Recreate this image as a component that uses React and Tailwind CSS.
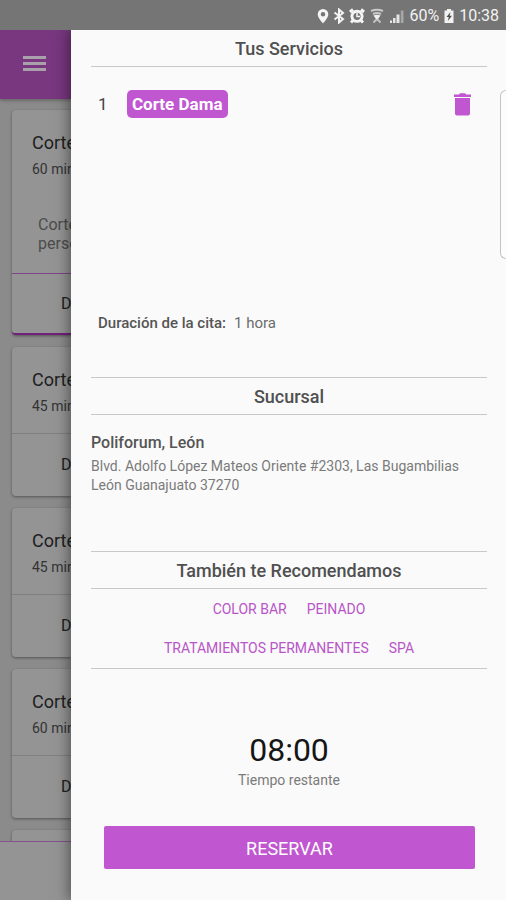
import React from "react";

const services = [
  { name: "Corte", time: "60 min", note: ["Corte", "perso"], featured: true },
  { name: "Corte", time: "45 min" },
  { name: "Corte", time: "45 min" },
  { name: "Corte", time: "60 min" },
];

function StatusBar() {
  return (
    <header className="flex h-[30px] items-center justify-end gap-1 bg-[#757575] pr-[7px] pt-[2px] text-[16px] leading-7 text-[#f2f2f2]">
      <svg className="h-4 w-3" viewBox="0 0 12 16" aria-hidden="true">
        <path fill="#f4f4f4" fillRule="evenodd" d="M6 1a5.3 5.3 0 0 0-5.3 5.3C.7 10 6 15.400 6 15.400S11.300 10 11.300 6.300A5.300 5.300 0 0 0 6 1zm0 3a2.300 2.300 0 1 1 0 4.600A2.300 2.300 0 0 1 6 4z" />
      </svg>
      <svg className="h-4 w-3" viewBox="0 0 12 16" aria-hidden="true">
        <path fill="none" stroke="#f4f4f4" strokeWidth="2" d="M1.500 4.500L10 11l-4 3.500v-13L10 5l-8.500 6.500" />
      </svg>
      <svg className="h-4 w-4" viewBox="0 0 16 16" aria-hidden="true">
        <path stroke="#f4f4f4" strokeWidth="3" d="M1 4l3-2.500M15 4l-3-2.500M2 14.500l2.500-2.500M14 14.500l-2.500-2.500" />
        <circle cx="8" cy="8.300" r="6.500" fill="#f4f4f4" />
        <circle cx="8" cy="8.300" r="3.600" fill="#757575" />
        <path fill="none" stroke="#f4f4f4" strokeWidth="1.500" d="M8 5v3.500h3" />
      </svg>
      <svg className="h-4 w-4" viewBox="0 0 16 16" aria-hidden="true">
        <path fill="none" stroke="#c8c8c8" strokeWidth="2" d="M2 3q6-2.500 12 0M4 6q4-2 8 0" />
        <path fill="#f0f0f0" d="M4.500 7.500q3.500-1.500 7 0L8 12.500z" />
        <path fill="none" stroke="#c4c4c4" strokeWidth="1.800" d="M4.500 14.500l3-3M8.500 11.500l3 3" />
      </svg>
      <svg className="h-4 w-4" viewBox="0 0 16 16" aria-hidden="true">
        <path fill="#e6e6e6" d="M1 12.500h2V15H1zM4 10h2.500v5H4zM7.500 6.500h3V15h-3z" />
        <path fill="#a6a6a6" d="M11.800 2.500h2.700V15h-2.700z" />
      </svg>
      <span>60%</span>
      <svg className="h-4 w-3" viewBox="0 0 12 16" aria-hidden="true">
        <path fill="#f2f2f2" d="M4 1h4v1.500h2.500V15h-9V2.500H4z" />
        <path fill="#4c4c4c" d="M7.500 4L3.500 9h2.300l-1 4L9 7.700H6.600z" />
      </svg>
      <span>10:38</span>
    </header>
  );
}

function ServiceCard({ service }) {
  const featured = service.featured;
  return (
    <article
      className={
        "ml-3 shrink-0 rounded-l-sm bg-[#949494] text-[#202020] shadow-[0_1px_3px_rgba(0,0,0,0.4)] " +
        (featured ? "border-b-2 border-[#71217c]" : "")
      }
    >
      <div className={featured ? "h-[163px] pl-5 pt-[21px]" : "h-[86px] pl-5 pt-[21px]"}>
        <h3 className="text-[18px] leading-6">{service.name}</h3>
        <p className="mt-1 whitespace-nowrap text-[14px] leading-5 text-[#333333]">{service.time}</p>
        {service.note && (
          <p className="mt-9 pl-[6px] text-[16px] leading-[19px] text-[#4c4c4c]">
            {service.note[0]}
            <br />
            {service.note[1]}
          </p>
        )}
      </div>
      <div
        className={
          "flex items-center border-t pl-[49px] text-[16px] " +
          (featured ? "h-[60px] border-t-[#7f4489]" : "h-[63px] border-t-[#808080]")
        }
      >
        D
      </div>
    </article>
  );
}

function BackgroundPage() {
  return (
    <main className="flex w-[71px] shrink-0 flex-col overflow-hidden bg-[#8b8b8b]">
      <div className="z-10 flex h-[69px] shrink-0 items-center bg-[#78377f] pb-[2px] pl-[23px] shadow-[0_1px_4px_rgba(0,0,0,0.35)]">
        <button type="button" aria-label="Menú" className="flex w-[23px] flex-col gap-[3px]">
          <span className="h-[3px] bg-[#aaa0ac]" />
          <span className="h-[3px] bg-[#aaa0ac]" />
          <span className="h-[3px] bg-[#aaa0ac]" />
        </button>
      </div>
      <div className="flex h-0 grow flex-col gap-3 overflow-hidden pt-[11px]">
        {services.map((service, i) => (
          <ServiceCard key={i} service={service} />
        ))}
        <div className="ml-3 h-4 shrink-0 rounded-tl-sm bg-[#949494] shadow-[0_1px_3px_rgba(0,0,0,0.4)]" />
      </div>
      <div className="h-[59px] shrink-0 border-t border-[#85508e] bg-[#949494]" />
    </main>
  );
}

function SectionTitle({ children }) {
  return (
    <h2 className="border-b border-[#c8c8c8] pt-[2px] text-center text-[18px] font-medium leading-[34px] text-[#505050]">
      {children}
    </h2>
  );
}

function Drawer() {
  return (
    <aside className="z-20 flex min-w-0 grow flex-col bg-[#fafafa] pl-5 pr-[19px] text-[#6c6c6c] shadow-[0_0_14px_1px_rgba(0,0,0,0.5)]">
      <SectionTitle>Tus Servicios</SectionTitle>
      <div className="-mr-[19px] flex h-[192px] pt-[23px]">
        <div className="flex h-7 grow items-center pl-[7px] pr-[28px]">
          <span className="w-[29px] text-[17px] leading-7 text-[#444444]">1</span>
          <span className="rounded-[5px] bg-[#c056d0] px-[5px] text-[17px] font-bold leading-7 text-white">
            Corte Dama
          </span>
          <button type="button" aria-label="Eliminar" className="ml-auto">
            <svg className="h-[23px] w-[19px]" viewBox="0 0 19 23" aria-hidden="true">
              <path fill="#c056d0" d="M1 1.500h5L7 .3h5l1.200 1.200H18v2.500H1zM2 5h15v15.500a2 2 0 0 1-2 2H4a2 2 0 0 1-2-2z" />
            </svg>
          </button>
        </div>
        <div className="h-[169px] w-[6px] shrink-0 rounded-l-[6px] border border-r-0 border-[#c4c4c4] bg-[#fcfcfc]" />
      </div>
      <p className="mt-[54px] pl-[7px] text-[15px] leading-5">
        <span className="mr-2 font-medium text-[#555555]">Duración de la cita:</span>1 hora
      </p>

      <section className="mt-11 border-t border-[#c8c8c8]">
        <SectionTitle>Sucursal</SectionTitle>
        <h3 className="mt-[18px] text-[16px] font-medium leading-5 text-[#555555]">Poliforum, León</h3>
        <address className="mt-1 text-[14px] not-italic leading-[19px] text-[#7a7a7a]">
          Blvd. Adolfo López Mateos Oriente #2303, Las Bugambilias
          <br />
          León Guanajuato 37270
        </address>
      </section>

      <section className="mt-14 border-y border-[#c8c8c8]">
        <SectionTitle>También te Recomendamos</SectionTitle>
        <nav className="flex flex-col items-center pt-px text-[14px] leading-[39px] text-[#b855c8]">
          <div className="flex gap-5">
            <a href="#color">COLOR BAR</a>
            <a href="#peinado">PEINADO</a>
          </div>
          <div className="flex gap-5">
            <a href="#tratamientos">TRATAMIENTOS PERMANENTES</a>
            <a href="#spa">SPA</a>
          </div>
        </nav>
      </section>

      <div className="mt-[61px] text-center">
        <p className="text-[32px] leading-10 text-[#161616]">08:00</p>
        <p className="text-[14px] leading-5 text-[#7a7a7a]">Tiempo restante</p>
      </div>
      <button
        type="button"
        className="ml-[13px] mr-3 mb-[31px] mt-auto h-[43px] rounded-[2px] bg-[#c056d0] pt-px text-[18px] text-white"
      >
        RESERVAR
      </button>
    </aside>
  );
}

export default function App() {
  return (
    <div className="flex min-h-screen flex-col overflow-hidden bg-[#8b8b8b] font-[Roboto,sans-serif]">
      <StatusBar />
      <div className="flex grow overflow-hidden">
        <BackgroundPage />
        <Drawer />
      </div>
    </div>
  );
}
